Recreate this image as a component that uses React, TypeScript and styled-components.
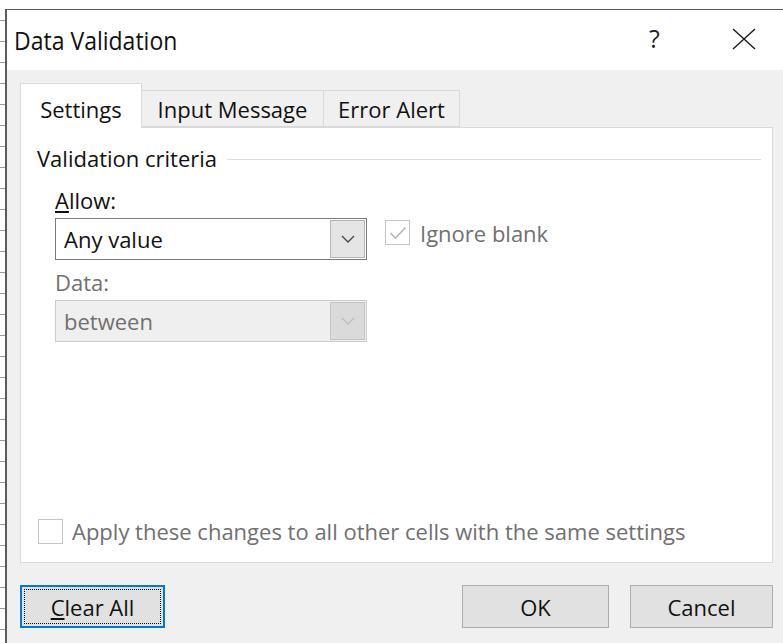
import styled, { createGlobalStyle } from 'styled-components';

const GlobalStyle = createGlobalStyle`
  html,
  body {
    margin: 0;
    padding: 0;
    background: #ffffff;
  }
  * {
    box-sizing: border-box;
  }
`;

const Chevron = ({ color }: { color: string }) => (
  <svg width="14" height="8" viewBox="0 0 14 8">
    <path d="M1 1 L7 7 L13 1" fill="none" stroke={color} strokeWidth="1.3" />
  </svg>
);

const CheckMark = ({ color }: { color: string }) => (
  <svg width="18" height="14" viewBox="0 0 18 14">
    <path d="M1.5 7 L6.5 12 L16.5 1.5" fill="none" stroke={color} strokeWidth="1.6" />
  </svg>
);

const CloseGlyph = () => (
  <svg width="24" height="22" viewBox="0 0 24 22">
    <path d="M1 1 L23 21 M23 1 L1 21" fill="none" stroke="#1a1a1a" strokeWidth="1.4" />
  </svg>
);

const tabs = ['Settings', 'Input Message', 'Error Alert'];
const tabWidths = [122, 183, 137];

export default function App() {
  return (
    <>
      <GlobalStyle />
      <Screen>
        <RowGutter />
        <Column>
          <ColumnGutter />
          <Dialog>
            <TitleBar>
              <Title>Data Validation</Title>
              <HelpButton>?</HelpButton>
              <CloseButton>
                <CloseGlyph />
              </CloseButton>
            </TitleBar>
            <Body>
              <TabList>
                {tabs.map((t, i) => (
                  <Tab key={t} $active={i === 0} $width={tabWidths[i]}>
                    {t}
                  </Tab>
                ))}
              </TabList>
              <Panel>
                <GroupHeader>
                  <Legend>Validation criteria</Legend>
                  <Rule />
                </GroupHeader>
                <Criteria>
                  <FieldColumn>
                    <FieldLabel>
                      <u>A</u>llow:
                    </FieldLabel>
                    <Select>
                      <SelectValue>Any value</SelectValue>
                      <SelectArrow>
                        <Chevron color="#444" />
                      </SelectArrow>
                    </Select>
                    <FieldLabel $disabled>Data:</FieldLabel>
                    <Select $disabled>
                      <SelectValue $disabled>between</SelectValue>
                      <SelectArrow $disabled>
                        <Chevron color="#bdbdbd" />
                      </SelectArrow>
                    </Select>
                  </FieldColumn>
                  <CheckRow>
                    <Box>
                      <CheckMark color="#b5b5b5" />
                    </Box>
                    <CheckText>Ignore blank</CheckText>
                  </CheckRow>
                </Criteria>
                <ApplyRow>
                  <Box />
                  <CheckText>Apply these changes to all other cells with the same settings</CheckText>
                </ApplyRow>
              </Panel>
              <Footer>
                <Button $focused>
                  <FocusRing>
                    <u>C</u>lear All
                  </FocusRing>
                </Button>
                <Spacer />
                <Button $width={147}>OK</Button>
                <Button $width={143}>Cancel</Button>
              </Footer>
            </Body>
          </Dialog>
        </Column>
      </Screen>
    </>
  );
}

const Screen = styled.div`
  width: 783px;
  height: 643px;
  overflow: hidden;
  display: flex;
  font-family: 'Open Sans', 'Noto Sans', sans-serif;
  color: #111;
`;

/* spreadsheet row lines peeking out behind the dialog */
const RowGutter = styled.div`
  width: 5px;
  flex-shrink: 0;
  background: repeating-linear-gradient(
    to bottom,
    #ffffff 0px,
    #ffffff 20px,
    #9a9a9a 20px,
    #9a9a9a 21px
  );
`;

const Column = styled.div`
  flex: 1;
  display: flex;
  flex-direction: column;
  min-width: 0;
`;

const ColumnGutter = styled.div`
  height: 9px;
  flex-shrink: 0;
  background: #ffffff;
`;

const Dialog = styled.div`
  flex: 1;
  display: flex;
  flex-direction: column;
  border-left: 2px solid #5c5c5c;
  border-top: 1px solid #5c5c5c;
`;

const TitleBar = styled.div`
  height: 60px;
  flex-shrink: 0;
  display: flex;
  align-items: center;
  background: #ffffff;
  padding-left: 7px;
`;

const Title = styled.div`
  flex: 1;
  font-size: 23px;
  color: #111;
  transform: scale(1, 1.1);
  transform-origin: left center;
`;

const HelpButton = styled.div`
  width: 14px;
  font-size: 25px;
  line-height: 1;
  color: #222;
  margin-right: 69px;
  margin-top: -3px;
`;

const CloseButton = styled.div`
  display: flex;
  margin-right: 27px;
  margin-top: -2px;
`;

const Body = styled.div`
  flex: 1;
  display: flex;
  flex-direction: column;
  background: #f0f0f0;
  padding: 13px 10px 0 13px;
`;

const TabList = styled.div`
  display: flex;
  align-items: flex-end;
  height: 44px;
  position: relative;
  z-index: 1;
`;

const Tab = styled.div<{ $active?: boolean; $width: number }>`
  width: ${(p) => p.$width}px;
  height: ${(p) => (p.$active ? 45 : 37)}px;
  margin-bottom: ${(p) => (p.$active ? -1 : 0)}px;
  display: flex;
  align-items: center;
  justify-content: center;
  padding-top: ${(p) => (p.$active ? 5 : 0)}px;
  background: ${(p) => (p.$active ? '#ffffff' : '#f0f0f0')};
  border: 1px solid #d9d9d9;
  border-bottom: ${(p) => (p.$active ? 'none' : '1px solid #d9d9d9')};
  margin-left: ${(p) => (p.$active ? 0 : -1)}px;
  font-size: 22px;
  color: #111;
`;

const Panel = styled.div`
  height: 436px;
  display: flex;
  flex-direction: column;
  background: #ffffff;
  border: 1px solid #d9d9d9;
  padding: 15px 11px 16px 16px;
`;

const GroupHeader = styled.div`
  display: flex;
  align-items: center;
  gap: 10px;
  height: 30px;
`;

const Legend = styled.div`
  font-size: 22px;
  color: #111;
`;

const Rule = styled.div`
  flex: 1;
  height: 1px;
  background: #dcdcdc;
  margin-top: 2px;
`;

const Criteria = styled.div`
  display: flex;
  align-items: flex-start;
  gap: 18px;
  padding-left: 18px;
  margin-top: 14px;
`;

const FieldColumn = styled.div`
  width: 312px;
  display: flex;
  flex-direction: column;
`;

const FieldLabel = styled.div<{ $disabled?: boolean }>`
  font-size: 22px;
  line-height: 26px;
  color: ${(p) => (p.$disabled ? '#707070' : '#111')};
  margin-bottom: 5px;
  margin-top: ${(p) => (p.$disabled ? 9 : 0)}px;
`;

const Select = styled.div<{ $disabled?: boolean }>`
  height: 42px;
  display: flex;
  background: ${(p) => (p.$disabled ? '#efefef' : '#ffffff')};
  border: 1px solid ${(p) => (p.$disabled ? '#cccccc' : '#7a7a7a')};
`;

const SelectValue = styled.div<{ $disabled?: boolean }>`
  flex: 1;
  display: flex;
  align-items: center;
  padding-left: 8px;
  font-size: 22px;
  color: ${(p) => (p.$disabled ? '#707070' : '#111')};
`;

const SelectArrow = styled.div<{ $disabled?: boolean }>`
  width: 35px;
  display: flex;
  align-items: center;
  justify-content: center;
  margin: 1px;
  background: ${(p) => (p.$disabled ? '#dadada' : '#e5e5e5')};
  border: 1px solid ${(p) => (p.$disabled ? '#c4c4c4' : '#b4b4b4')};
`;

const CheckRow = styled.div`
  display: flex;
  align-items: center;
  gap: 10px;
  height: 25px;
  margin-top: 33px;
`;

const Box = styled.div`
  width: 25px;
  height: 25px;
  flex-shrink: 0;
  display: flex;
  align-items: center;
  justify-content: center;
  border: 1px solid #c4c4c4;
  background: #ffffff;
`;

const CheckText = styled.div`
  font-size: 22px;
  color: #707070;
`;

const ApplyRow = styled.div`
  margin-top: auto;
  display: flex;
  align-items: center;
  gap: 9px;
  padding-left: 1px;
`;

const Footer = styled.div`
  display: flex;
  gap: 21px;
  margin-top: 22px;
`;

const Spacer = styled.div`
  flex: 1;
`;

const Button = styled.div<{ $focused?: boolean; $width?: number }>`
  width: ${(p) => p.$width ?? 145}px;
  height: 43px;
  display: flex;
  align-items: center;
  justify-content: center;
  padding: ${(p) => (p.$focused ? '2px' : 0)};
  background: #e1e1e1;
  border: ${(p) => (p.$focused ? '2px solid #0078d7' : '1px solid #adadad')};
  font-size: 22px;
  color: #111;
`;

const FocusRing = styled.div`
  width: 100%;
  height: 100%;
  display: flex;
  align-items: center;
  justify-content: center;
  border: 1px dotted #111;
`;
